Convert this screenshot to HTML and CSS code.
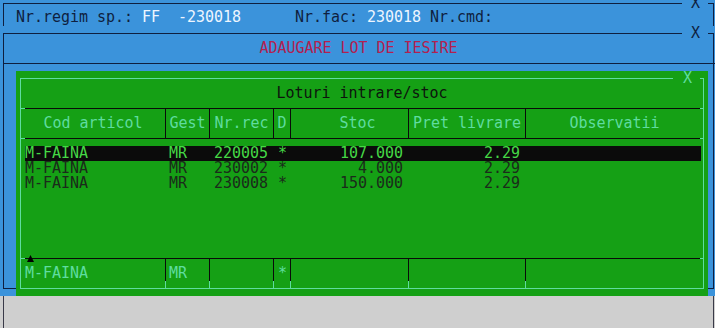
FILE: index.html
```html
<!DOCTYPE html>
<html>
<head>
	<meta charset="utf-8">
	<title>Loturi intrare/stoc</title>
	<link rel="stylesheet" href="styles.css">
</head>
<body>
	<div class="ecran">
		<div class="fereastra fereastra-doc">
			<div class="cadru">
				<div class="bara-sus"><span class="linie"></span><span class="inchide">X</span><span class="colt"></span></div>
				<div class="rand-doc"><span class="et">Nr.regim sp.: </span><span class="val">FF  -230018</span><span class="et">      Nr.fac: </span><span class="val">230018</span><span class="et"> Nr.cmd:</span></div>
			</div>
		</div>

		<div class="fereastra fereastra-lot">
			<div class="cadru">
				<div class="bara-sus"><span class="linie"></span><span class="inchide">X</span><span class="colt"></span></div>
				<div class="titlu-lot">ADAUGARE LOT DE IESIRE</div>
				<div class="separator"></div>

				<div class="panou">
					<div class="caseta">
						<div class="bara-sus"><span class="linie"></span><span class="inchide">X</span><span class="colt"></span></div>
						<div class="titlu-caseta">Loturi intrare/stoc</div>
						<div class="sep"></div>

						<div class="cap grila">
							<div>Cod articol</div>
							<div>Gest</div>
							<div>Nr.rec</div>
							<div>D</div>
							<div class="stoc">Stoc</div>
							<div>Pret livrare</div>
							<div>Observatii</div>
						</div>
						<div class="sep"></div>

						<div class="date">
							<div class="rand selectat">
								<div>M-FAINA</div><div class="c-gest">MR</div><div class="c-rec">220005</div><div class="c-d">*</div><div class="num">107.000</div><div class="num">2.29</div><div></div>
							</div>
							<div class="rand">
								<div>M-FAINA</div><div class="c-gest">MR</div><div class="c-rec">230002</div><div class="c-d">*</div><div class="num">4.000</div><div class="num">2.29</div><div></div>
							</div>
							<div class="rand">
								<div>M-FAINA</div><div class="c-gest">MR</div><div class="c-rec">230008</div><div class="c-d">*</div><div class="num">150.000</div><div class="num">2.29</div><div></div>
							</div>
						</div>

						<div class="sep sep-jos"><span class="sageata"></span></div>

						<div class="editare grila">
							<div class="c-cod">M-FAINA</div>
							<div class="c-gest">MR</div>
							<div></div>
							<div class="c-d">*</div>
							<div></div>
							<div></div>
							<div></div>
						</div>
					</div>
				</div>
			</div>
		</div>
	</div>
	<div class="jos"></div>
</body>
</html>
```

FILE: styles.css
```css
body {
	margin: 0;
	background-color: #cfcfcf;
	font-family: "DejaVu Sans Mono", "Liberation Mono", monospace;
	font-size: 15px;
	letter-spacing: -0.03px;
	overflow: hidden;
}

.ecran {
	height: 296px;
	background-color: #3b93db;
}

/* ferestre text-mode */
.fereastra-doc {
	height: 26px;
	overflow: hidden;
}

.fereastra .cadru {
	width: 711px;
	box-sizing: border-box;
	margin-left: 3px;
	border-left: 1px solid #0f1f3f;
	border-right: 1px solid #0f1f3f;
	color: #0f1f3f;
}

.fereastra-doc .cadru {
	margin-top: 3px;
	height: 40px;
}

.fereastra-lot .cadru {
	margin-top: 7px;
	border-bottom: 1px solid #0f1f3f;
}

.bara-sus {
	display: flex;
	align-items: center;
	height: 1px;
}

.bara-sus .linie {
	flex: 1;
	height: 1px;
	background-color: currentColor;
}

.bara-sus .inchide {
	width: 9px;
	margin: 0 8px 0 9px;
	line-height: 15px;
}

.bara-sus .colt {
	width: 5px;
	height: 1px;
	background-color: currentColor;
}

.rand-doc {
	margin-top: 6px;
	padding-left: 12px;
	height: 15px;
	line-height: 15px;
	white-space: pre;
}

.rand-doc .val { color: #eef6ff; }

.titlu-lot {
	height: 29px;
	line-height: 29px;
	text-align: center;
	color: #b3204f;
}

.separator {
	height: 1px;
	margin-right: -3px;
	background-color: #0f1f3f;
}

/* panoul verde */
.panou {
	height: 225px;
	box-sizing: border-box;
	margin: 7px 5px -8px 12px;
	padding: 7px 4px;
	background-color: #15a015;
}

.caseta {
	border: 1px solid #5fdca0;
	border-top: none;
	color: #5fdca0;
}

.caseta .bara-sus .inchide {
	margin: 0 8px 0 10px;
}

.caseta .bara-sus .colt { width: 3px; }

.titlu-caseta {
	height: 29px;
	line-height: 29px;
	text-align: center;
	color: #0d140d;
}

.sep {
	height: 1px;
	background: linear-gradient(to right, #5fdca0 4px, #0a0a0a 4px, #0a0a0a calc(100% - 3px), #5fdca0 calc(100% - 3px));
}

.sep-jos { position: relative; }

.sageata {
	position: absolute;
	left: 6px;
	top: -3px;
	width: 7px;
	height: 7px;
	background-color: #000;
	clip-path: polygon(50% 0, 100% 100%, 0 100%);
}

.grila {
	display: grid;
	grid-template-columns: 145px 44px 64px 17px 118px 117px 1fr;
	height: 29px;
	line-height: 29px;
}

.cap > div {
	text-align: center;
	border-right: 1px solid #0a0a0a;
	white-space: pre;
}

.cap > div:last-child { border-right: none; }

.cap .stoc { padding-left: 16px; }

.date {
	height: 119px;
	box-sizing: border-box;
	padding-top: 7px;
	color: #1b2b1b;
}

.rand {
	display: grid;
	grid-template-columns: 141px 44px 64px 17px 118px 117px 1fr;
	margin: 0 2px 0 4px;
	height: 15px;
	line-height: 15px;
	white-space: pre;
}

.rand.selectat {
	background-color: #0b0b0b;
	color: #45d845;
}

.rand .c-gest { padding-left: 3px; }
.rand .c-rec { padding-left: 4px; }
.rand .c-d { text-align: center; }
.rand .num {
	text-align: right;
	padding-right: 6px;
}

.editare > div {
	background:
		linear-gradient(#0a0a0a, #0a0a0a) right top / 1px calc(100% - 7px) no-repeat,
		linear-gradient(#5fdca0, #5fdca0) right bottom / 1px 7px no-repeat;
}

.editare > div:last-child { background: none; }

.editare .c-cod { padding-left: 4px; }
.editare .c-gest { padding-left: 3px; }
.editare .c-d { text-align: center; }

.jos {
	width: 711px;
	height: 32px;
	box-sizing: border-box;
	margin-left: 3px;
	border-left: 1px solid #3a3a48;
	border-right: 1px solid #3a3a48;
}
```
